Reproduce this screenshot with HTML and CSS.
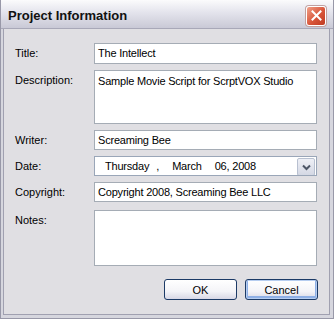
FILE: index.html
```html
<!DOCTYPE html>
<html lang="en">
<head>
    <meta charset="UTF-8">
    <title>Project Information</title>
    <link rel="stylesheet" href="styles.css">
</head>
<body>
    <div class="window">
        <!-- Title bar -->
        <div class="titlebar">
            <span class="title">Project Information</span>
            <span class="close">
                <svg width="11" height="11" viewBox="0 0 11 11">
                    <path d="M1.5 1.5 L9.5 9.5 M9.5 1.5 L1.5 9.5" stroke="#fff" stroke-width="2" stroke-linecap="square"/>
                </svg>
            </span>
        </div>

        <!-- Dialog body -->
        <div class="content">
            <div class="form">
                <label class="label">Title:</label>
                <div class="field">The Intellect</div>

                <label class="label">Description:</label>
                <div class="field multi">Sample Movie Script for ScrptVOX Studio</div>

                <label class="label">Writer:</label>
                <div class="field">Screaming Bee</div>

                <label class="label">Date:</label>
                <div class="field date">
                    <span class="day">Thursday</span>
                    <span class="comma">,</span>
                    <span class="month">March</span>
                    <span class="year">06, 2008</span>
                    <span class="drop">
                        <svg width="9" height="7" viewBox="0 0 9 7">
                            <path d="M1 1.5 L4.5 5 L8 1.5" fill="none" stroke="#4d5666" stroke-width="2"/>
                        </svg>
                    </span>
                </div>

                <label class="label">Copyright:</label>
                <div class="field">Copyright 2008, Screaming Bee LLC</div>

                <label class="label notes-label">Notes:</label>
                <div class="field notes"></div>
            </div>

            <div class="buttons">
                <button class="btn">OK</button>
                <button class="btn default">Cancel</button>
            </div>
        </div>
    </div>
</body>
</html>
```

FILE: styles.css
```css
body {
    margin: 0;
    font-family: "Liberation Sans", Arial, sans-serif;
    font-size: 11px;
    color: #000;
}
.window {
    width: 334px;
    height: 319px;
    box-sizing: border-box;
    background: #d6d6de;
    border: 1px solid #9898a8;
    border-top: none;
    padding: 0 3px 3px 2px;
    display: flex;
    flex-direction: column;
}
.titlebar {
    height: 29px;
    margin: 0 -3px 0 -2px;
    background: linear-gradient(#fbfbfc, #e6e6ee 40%, #c9c9d6);
    display: flex;
    align-items: center;
    justify-content: space-between;
    padding: 0 7px 0 7px;
    box-sizing: border-box;
    border-bottom: 1px solid #a8a8b8;
}
.title {
    font-weight: bold;
    font-size: 13px;
    color: #111;
    margin-top: 3px;
}
.close {
    width: 18px;
    height: 18px;
    margin-top: 3px;
    border: 1px solid #fff;
    border-radius: 3px;
    background: linear-gradient(135deg, #f0a088, #d8553a 55%, #c03a22);
    display: flex;
    align-items: center;
    justify-content: center;
    box-shadow: 0 0 0 1px #c0a0a0;
}
.content {
    flex: 1;
    background: #e0dfe3;
    border: 1px solid #a0a0b0;
    border-top: none;
    padding: 14px 11px 0 11px;
    display: flex;
    flex-direction: column;
}
.form {
    display: grid;
    grid-template-columns: 79px 223px;
    grid-template-rows: 21px 54px 20px 20px 20px 56px;
    row-gap: 6px;
}
.label {
    padding-top: 4px;
}
.field {
    background: #fff;
    border: 1px solid #a5acb5;
    box-sizing: border-box;
    padding: 3px 3px 0 3px;
    white-space: nowrap;
    overflow: hidden;
    letter-spacing: -0.2px;
}
.multi {
    padding-top: 4px;
}
.notes-label {
    margin-top: 2px;
}
.notes {
    margin-top: 2px;
    height: 56px;
}
.date {
    display: flex;
    align-items: center;
    padding: 0 0 0 10px;
    border-color: #9aa6b8;
    position: relative;
}
.comma {
    margin-left: 7px;
}
.month {
    margin-left: 13px;
}
.year {
    margin-left: 13px;
}
.drop {
    position: absolute;
    right: 1px;
    top: 1px;
    width: 16px;
    height: 16px;
    border: 1px solid #b8c0d0;
    border-radius: 2px;
    background: linear-gradient(#eef0f6, #d4d8e4);
    display: flex;
    align-items: center;
    justify-content: center;
}
.buttons {
    display: flex;
    justify-content: flex-end;
    gap: 8px;
    margin-top: 15px;
}
.btn {
    width: 73px;
    height: 21px;
    font-family: "Liberation Sans", Arial, sans-serif;
    font-size: 11px;
    color: #000;
    border: 1px solid #1c3a66;
    border-radius: 3px;
    background: linear-gradient(#ffffff, #f4f4f8 60%, #d8d8e6);
    padding: 0;
}
.default {
    box-shadow: inset 0 0 0 1px #b6cdf0, inset 0 -1px 0 2px #8fb0e6;
}
```
